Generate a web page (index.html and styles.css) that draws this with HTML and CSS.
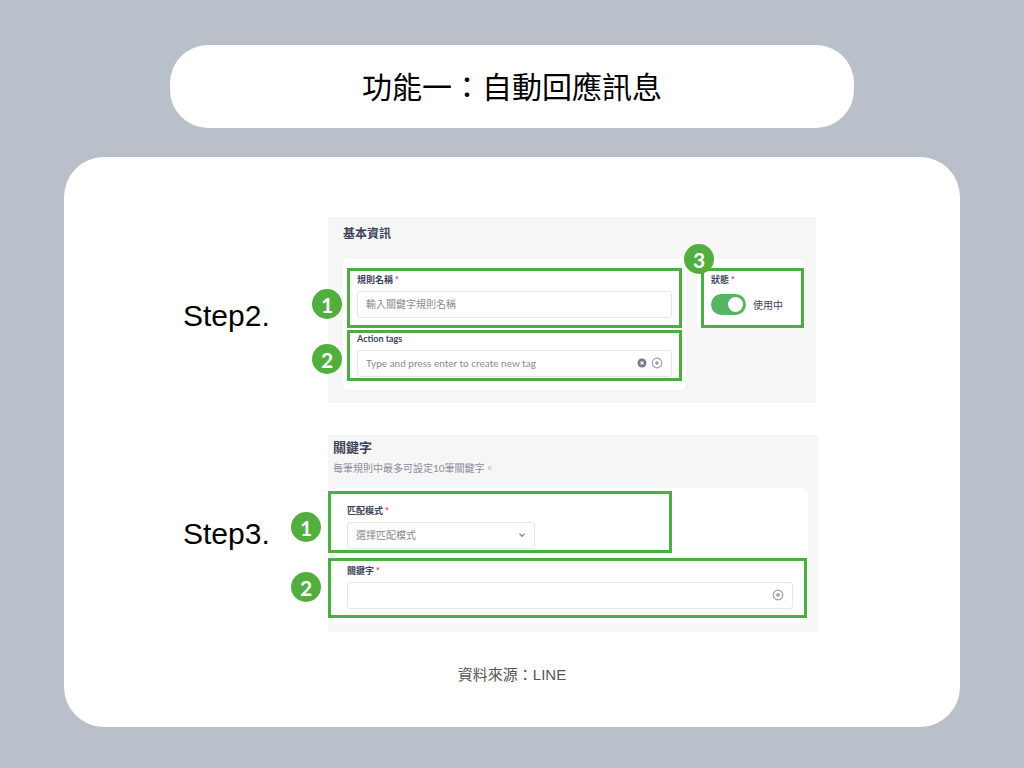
FILE: index.html
```html
<!DOCTYPE html>
<html lang="zh-Hant">
<head>
    <meta charset="UTF-8">
    <meta name="viewport" content="width=device-width, initial-scale=1.0">
    <title>功能一：自動回應訊息</title>
    <link rel="stylesheet" href="styles.css">
</head>
<body>
    <h1 class="title">功能一：自動回應訊息</h1>
    <main class="card">
        <section class="step">
            <h2 class="step-name">Step2.</h2>
            <div class="panel panel-basic">
                <h3>基本資訊</h3>
                <div class="basic-columns">
                    <div class="box box-fields">
                        <div class="mark mark-name">
                            <span class="badge">1</span>
                            <label for="ruleName">規則名稱<span class="required">*</span></label>
                            <div class="field">
                                <input type="text" id="ruleName" placeholder="輸入關鍵字規則名稱">
                            </div>
                        </div>
                        <div class="mark mark-tags">
                            <span class="badge badge-second">2</span>
                            <label for="tags">Action tags</label>
                            <div class="field">
                                <input type="text" id="tags" placeholder="Type and press enter to create new tag">
                                <button type="button" class="icon-btn" aria-label="清除">
                                    <svg width="10" height="10" viewBox="0 0 10 10"><circle cx="5" cy="5" r="4.5" fill="#777c8a"/><path d="M3.6 3.6l2.8 2.8M6.4 3.6L3.6 6.4" stroke="#fff" stroke-width="1.3"/></svg>
                                </button>
                                <button type="button" class="icon-btn" aria-label="新增標籤">
                                    <svg width="12" height="12" viewBox="0 0 12 12" fill="none" stroke="#9a9ea9"><circle cx="6" cy="6" r="4.8" stroke-width="1.2"/><path d="M6 4v4M4 6h4" stroke-width="1.4"/></svg>
                                </button>
                            </div>
                        </div>
                    </div>
                    <div class="box box-status">
                        <div class="mark mark-name">
                            <span class="badge badge-corner">3</span>
                            <label for="status">狀態<span class="required">*</span></label>
                            <div class="switch-row">
                                <input type="checkbox" id="status" class="switch" checked>
                                <span>使用中</span>
                            </div>
                        </div>
                    </div>
                </div>
            </div>
        </section>
        <section class="step">
            <h2 class="step-name">Step3.</h2>
            <div class="panel panel-keyword">
                <h3>關鍵字</h3>
                <p>每筆規則中最多可設定10筆關鍵字。</p>
                <div class="box box-keyword">
                    <div class="mark mark-mode">
                        <span class="badge">1</span>
                        <label for="mode">匹配模式<span class="required">*</span></label>
                        <div class="field field-select">
                            <select id="mode">
                                <option>選擇匹配模式</option>
                            </select>
                            <svg width="8" height="8" viewBox="0 0 8 8" fill="none" stroke="#8b8f9b" stroke-width="1.4"><path d="M1.5 2.8L4 5.2l2.5-2.4"/></svg>
                        </div>
                    </div>
                    <div class="mark mark-keyword">
                        <span class="badge badge-second">2</span>
                        <label for="keyword">關鍵字<span class="required">*</span></label>
                        <div class="field">
                            <input type="text" id="keyword">
                            <button type="button" class="icon-btn" aria-label="新增關鍵字">
                                <svg width="12" height="12" viewBox="0 0 12 12" fill="none" stroke="#9a9ea9"><circle cx="6" cy="6" r="4.8" stroke-width="1.2"/><path d="M6 4v4M4 6h4" stroke-width="1.4"/></svg>
                            </button>
                        </div>
                    </div>
                </div>
            </div>
        </section>
        <p class="source">資料來源：LINE</p>
    </main>
</body>
</html>
```
FILE: styles.css
```css
* {
    box-sizing: border-box;
}
body {
    font-family: "Liberation Sans", "Noto Sans CJK TC", sans-serif;
    background: #b9c0c9;
    margin: 0;
    padding: 45px 64px 41px;
    color: #000;
}
h1, h2, h3, p {
    margin: 0;
}
.title {
    background: #fff;
    margin: 0 106px 29px;
    padding: 21px 20px 18px;
    border-radius: 38px;
    font-size: 30px;
    font-weight: 400;
    line-height: 44px;
    text-align: center;
}
.card {
    background: #fff;
    border-radius: 40px;
    padding: 60px 142px 43px 119px;
}
.step {
    display: grid;
    grid-template-columns: 145px 1fr;
    margin-bottom: 32px;
}
.step-name {
    padding-top: 81px;
    font-size: 30px;
    font-weight: 400;
    line-height: 36px;
}

/* Panels */
.panel {
    background: #f6f6f6;
    font-family: Lato, "Noto Sans CJK TC", sans-serif;
    font-size: 10px;
    color: #3d4459;
}
.panel h3 {
    font-size: 13px;
    font-weight: 700;
    line-height: 18px;
}
.panel p {
    margin: 5px 0 13px;
    line-height: 14px;
    color: #8b8f9b;
}
.panel-basic {
    margin-right: 2px;
    padding: 8px 12px 13px 15px;
}
.panel-basic h3 {
    margin-bottom: 16px;
    font-size: 12px;
}
.panel-keyword {
    padding: 3px 10px 8px 5px;
}
.basic-columns {
    display: grid;
    grid-template-columns: 1fr 107px;
    gap: 11px;
    align-items: start;
}
.box {
    display: flex;
    flex-direction: column;
    background: #fff;
    border-radius: 5px;
}
.box-fields {
    gap: 2px;
    padding: 9px 4px;
}
.box-status {
    padding: 9px 0 0 4px;
}
.box-keyword {
    gap: 5px;
    padding: 3px 1px 6px 0;
}

/* Green outlines and numbers */
.mark {
    position: relative;
    border: 3px solid #4bae42;
    padding: 3px 7px 7px;
}
.mark label {
    display: block;
    margin-bottom: 5px;
    font-size: 9px;
    font-weight: 700;
    line-height: 12px;
}
.mark-tags {
    padding: 0 7px 1px;
}
.mark-mode {
    width: 344px;
    margin-left: -5px;
    padding: 11px 11px 1px 16px;
}
.mark-keyword {
    margin-left: -5px;
    padding: 4px 11px 6px 16px;
}
.badge {
    position: absolute;
    top: 18px;
    left: -38px;
    width: 30px;
    height: 30px;
    border-radius: 50%;
    background: #52ae3e;
    color: #fff;
    font-size: 21px;
    font-weight: 700;
    line-height: 31px;
    text-align: center;
}
.badge-second {
    top: 11px;
}
.badge-corner {
    top: -27px;
    left: -20px;
}
.panel-keyword .badge {
    left: -40px;
}
.required {
    margin-left: 2px;
    color: #e8344c;
}

/* Form controls */
.field {
    display: flex;
    align-items: center;
    gap: 4px;
    height: 27px;
    padding: 0 8px 1px;
    border: 1px solid #e6e6e8;
    border-radius: 3px;
    background: #fff;
}
.field input,
.field select {
    flex: 1;
    min-width: 0;
    padding: 0;
    border: 0;
    outline: 0;
    background: none;
    font: inherit;
    line-height: 14px;
    color: #85878e;
    appearance: none;
}
.field input::placeholder {
    color: #8a8a8c;
    opacity: 1;
}
.field-select {
    width: 188px;
}
.icon-btn {
    display: flex;
    padding: 0;
    border: 0;
    background: none;
}
.switch-row {
    display: flex;
    align-items: center;
    gap: 7px;
    height: 26px;
    margin-bottom: 1px;
}
.switch {
    appearance: none;
    display: flex;
    justify-content: flex-end;
    width: 35px;
    height: 21px;
    margin: 0;
    padding: 3px;
    border-radius: 11px;
    background: #56b462;
}
.switch::before {
    content: "";
    width: 15px;
    height: 15px;
    border-radius: 50%;
    background: #fff;
}

.source {
    /* evens out the card's side padding */
    margin: 34px 0 0 23px;
    font-size: 15px;
    line-height: 18px;
    text-align: center;
    color: #555;
}
```
